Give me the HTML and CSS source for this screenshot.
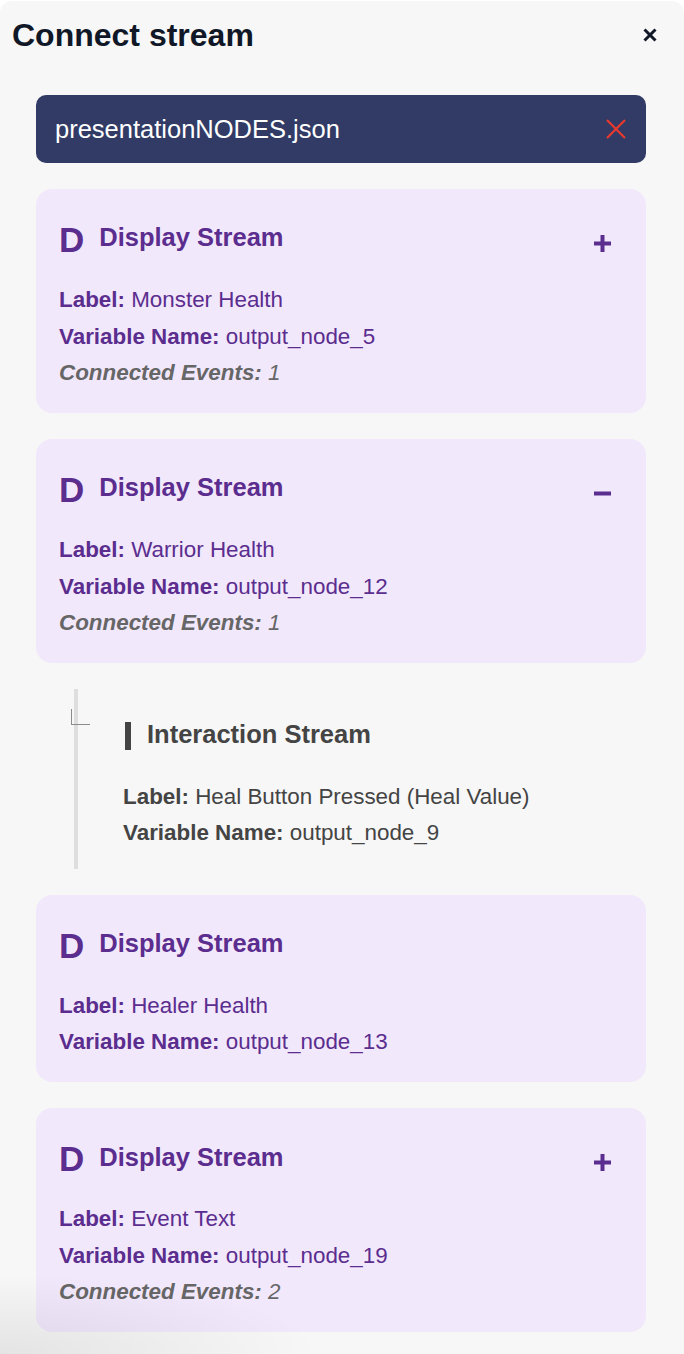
FILE: index.html
```html
<!DOCTYPE html>
<html lang="en">
<head>
<meta charset="utf-8">
<title>Connect stream</title>
<link rel="stylesheet" href="styles.css">
</head>
<body>
<div class="panel">
  <header class="header">
    <h1 class="title">Connect stream</h1>
    <button class="close" aria-label="Close">
      <svg width="14" height="14" viewBox="0 0 14 14"><path d="M1.5 1.5 L12.5 12.5 M12.5 1.5 L1.5 12.5" stroke="#111827" stroke-width="3" stroke-linecap="butt" fill="none"/></svg>
    </button>
  </header>

  <div class="list">
    <div class="file">
      <span class="file-name">presentationNODES.json</span>
      <svg class="file-x" width="20" height="20" viewBox="0 0 20 20"><path d="M1 1 L19 19 M19 1 L1 19" stroke="#e8392e" stroke-width="2.2" fill="none"/></svg>
    </div>

    <div class="card">
      <div class="card-head">
        <span class="badge">D</span>
        <span class="card-title">Display Stream</span>
        <svg class="toggle" width="17" height="17" viewBox="0 0 17 17"><rect x="0" y="6.5" width="17" height="4" fill="#5b2d8e"/><rect x="6.5" y="0" width="4" height="17" fill="#5b2d8e"/></svg>
      </div>
      <div class="lines">
        <div><b>Label:</b> Monster Health</div>
        <div><b>Variable Name:</b> output_node_5</div>
        <div class="events"><b>Connected Events:</b> 1</div>
      </div>
    </div>

    <div class="card">
      <div class="card-head">
        <span class="badge">D</span>
        <span class="card-title">Display Stream</span>
        <svg class="toggle" width="17" height="17" viewBox="0 0 17 17"><rect x="0" y="6.5" width="17" height="4" fill="#5b2d8e"/></svg>
      </div>
      <div class="lines">
        <div><b>Label:</b> Warrior Health</div>
        <div><b>Variable Name:</b> output_node_12</div>
        <div class="events"><b>Connected Events:</b> 1</div>
      </div>
    </div>

    <div class="nested">
      <span class="corner"></span>
      <div class="nested-head">
        <span class="bar"></span>
        <span class="nested-title">Interaction Stream</span>
      </div>
      <div class="lines nested-lines">
        <div><b>Label:</b> Heal Button Pressed (Heal Value)</div>
        <div><b>Variable Name:</b> output_node_9</div>
      </div>
    </div>

    <div class="card">
      <div class="card-head">
        <span class="badge">D</span>
        <span class="card-title">Display Stream</span>
      </div>
      <div class="lines">
        <div><b>Label:</b> Healer Health</div>
        <div><b>Variable Name:</b> output_node_13</div>
      </div>
    </div>

    <div class="card">
      <div class="card-head">
        <span class="badge">D</span>
        <span class="card-title">Display Stream</span>
        <svg class="toggle" width="17" height="17" viewBox="0 0 17 17"><rect x="0" y="6.5" width="17" height="4" fill="#5b2d8e"/><rect x="6.5" y="0" width="4" height="17" fill="#5b2d8e"/></svg>
      </div>
      <div class="lines">
        <div><b>Label:</b> Event Text</div>
        <div><b>Variable Name:</b> output_node_19</div>
        <div class="events"><b>Connected Events:</b> 2</div>
      </div>
    </div>
  </div>
</div>
</body>
</html>
```

FILE: styles.css
```css
* { box-sizing: border-box; }

html, body {
  margin: 0;
  padding: 0;
  background: #ffffff;
}

body {
  font-family: "Liberation Sans", Arial, Helvetica, sans-serif;
  overflow: hidden;
}

.panel {
  position: relative;
  margin-top: 1px;
  min-height: 1353px;
  background: #f7f7f7;
  border-radius: 12px 12px 0 0;
  padding-top: 16px;
  overflow: hidden;
}

.panel::after {
  content: "";
  position: absolute;
  left: 0;
  bottom: 0;
  width: 400px;
  height: 100px;
  background: radial-gradient(ellipse 100% 100% at 0% 100%, rgba(0,0,0,0.08) 0%, rgba(0,0,0,0.035) 45%, rgba(0,0,0,0) 80%);
  pointer-events: none;
}

.header {
  display: flex;
  align-items: center;
  justify-content: space-between;
  padding: 0 27px 0 12px;
  height: 36px;
}

.title {
  margin: 0;
  font-size: 32px;
  line-height: 36px;
  font-weight: 700;
  color: #101828;
}

.close {
  border: 0;
  background: none;
  padding: 0;
  width: 14px;
  height: 14px;
  display: block;
}
.close svg { display: block; }

.list {
  display: flex;
  flex-direction: column;
  gap: 26px;
  padding: 0 38px 0 36px;
  margin-top: 42px;
}

.file {
  height: 68px;
  border-radius: 10px;
  background: #313b65;
  display: flex;
  align-items: center;
  justify-content: space-between;
  padding: 0 20px 0 19px;
}

.file-name {
  color: #ffffff;
  font-size: 25.5px;
  line-height: 30px;
}

.file-x { display: block; }

.card {
  background: #f2e8fc;
  border-radius: 16px;
  padding: 31px 22px 21.5px 22px;
  color: #5b2d8e;
}

.card-head {
  display: flex;
  align-items: flex-start;
}

.badge {
  font-size: 35px;
  line-height: 40px;
  font-weight: 700;
  margin-left: 1px;
  margin-right: 15px;
}

.card-title {
  font-size: 25.5px;
  line-height: 30px;
  font-weight: 700;
  margin-top: 2.4px;
}

.toggle {
  display: block;
  margin-left: auto;
  margin-right: 13px;
  margin-top: 15px;
}

.lines {
  margin-top: 22px;
  font-size: 22.4px;
  line-height: 36.5px;
  padding-left: 1px;
}

.lines b { font-weight: 700; }

.events {
  color: #666666;
  font-style: italic;
}

.nested {
  position: relative;
  margin-left: 38px;
  border-left: 4px solid #dedede;
  padding: 30.4px 0 18px 45px;
  color: #444444;
}

.corner {
  position: absolute;
  left: -7px;
  top: 20px;
  width: 19px;
  height: 16px;
  border-left: 1.5px solid #8c8c8c;
  border-bottom: 1.5px solid #8c8c8c;
}

.nested-head {
  display: flex;
  align-items: flex-start;
}

.bar {
  display: block;
  width: 6px;
  height: 28px;
  background: #444444;
  margin-left: 2px;
  margin-right: 16px;
  margin-top: 2.6px;
}

.nested-title {
  font-size: 25.5px;
  line-height: 30px;
  font-weight: 700;
}

.nested-lines {
  margin-top: 28.7px;
  line-height: 36px;
  padding-left: 0;
}
```
